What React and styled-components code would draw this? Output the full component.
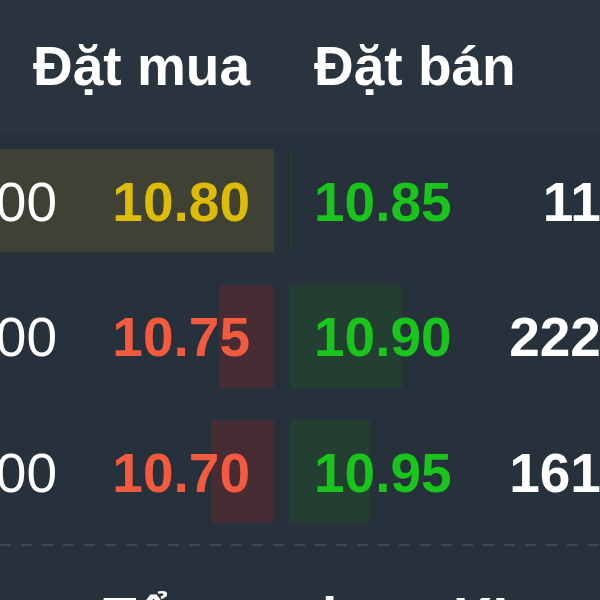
import React from 'react';
import styled, { createGlobalStyle } from 'styled-components';

const Global = createGlobalStyle`
  html, body { margin: 0; padding: 0; background: #27313c; }
  body { font-family: "Liberation Sans", Arial, sans-serif; }
`;

const COLORS = {
  white: '#ffffff',
  yellow: '#dcbc06',
  red: '#f35a3e',
  green: '#19c41b',
  redBar: '#482c34',
  greenBar: '#233f31',
  highlight: '#3e4133',
};

const Board = styled.div`
  width: 600px;
  height: 600px;
  overflow: hidden;
  background: #27313c;
  font-family: "Liberation Sans", Arial, sans-serif;
  font-size: 55px;
  font-weight: 700;
  line-height: 1;
`;

const Track = styled.div`
  width: 710px;
`;

const Grid = styled.div`
  display: grid;
  grid-template-columns: 274px 420px;
  column-gap: 16px;
`;

const HeaderRow = styled(Grid)`
  height: 133px;
  align-items: center;
  background: #2a343f;
  color: ${COLORS.white};
`;

const HeadCell = styled.div`
  text-align: ${(p) => (p.$side === 'bid' ? 'right' : 'left')};
  padding: ${(p) => (p.$side === 'bid' ? '0 24px 0 0' : '0 0 0 24px')};
  ${(p) => (p.$side === 'ask' ? 'width: 214px; box-sizing: border-box;' : '')}
  white-space: nowrap;
`;

const Body = styled.div`
  padding-bottom: 4px;
  border-bottom: 2px solid transparent;
  background-image: repeating-linear-gradient(
    to right,
    #3b4753 0 11px,
    transparent 11px 21px
  );
  background-size: 100% 2px;
  background-position: 0 100%;
  background-repeat: no-repeat;
  background-origin: border-box;
`;

const Row = styled(Grid)`
  height: 135.5px;
  align-items: center;
`;

const Side = styled.div`
  height: 103px;
  display: grid;
  grid-template-columns: ${(p) => (p.$side === 'bid' ? '1fr 214px' : '214px 1fr')};
  align-items: stretch;
  background: ${(p) => (p.$highlight ? COLORS.highlight : 'transparent')};
`;

const Qty = styled.div`
  display: flex;
  align-items: center;
  justify-content: flex-end;
  overflow: hidden;
  white-space: nowrap;
  color: ${COLORS.white};
  font-weight: ${(p) => (p.$side === 'bid' ? 400 : 700)};
  padding-right: ${(p) => (p.$side === 'bid' ? '3px' : '2px')};
  padding-top: 3px;
`;

const PriceCell = styled.div`
  position: relative;
  display: flex;
  align-items: center;
  justify-content: ${(p) => (p.$side === 'bid' ? 'flex-end' : 'flex-start')};
  padding: ${(p) => (p.$side === 'bid' ? '3px 24px 0 0' : '3px 0 0 24px')};
  color: ${(p) => p.$color};
`;

const Bar = styled.div`
  position: absolute;
  top: 0;
  bottom: 0;
  ${(p) => (p.$side === 'bid' ? 'right: 0;' : 'left: 0;')}
  background: ${(p) => (p.$side === 'bid' ? COLORS.redBar : COLORS.greenBar)};
`;

const PriceText = styled.span`
  position: relative;
`;

const FooterRow = styled.div`
  display: grid;
  grid-template-columns: 219px 131px auto;
  align-items: start;
  padding: 44px 0 0 103px;
  color: ${COLORS.white};
  white-space: nowrap;
`;

const rows = [
  {
    bidQty: '12,300', bid: '10.80', bidColor: COLORS.yellow, bidBar: 0, highlight: true,
    ask: '10.85', askColor: COLORS.green, askBar: 2, askQty: '11,700',
  },
  {
    bidQty: '25,600', bid: '10.75', bidColor: COLORS.red, bidBar: 55, highlight: false,
    ask: '10.90', askColor: COLORS.green, askBar: 112, askQty: '222,500',
  },
  {
    bidQty: '31,400', bid: '10.70', bidColor: COLORS.red, bidBar: 63, highlight: false,
    ask: '10.95', askColor: COLORS.green, askBar: 80, askQty: '161,300',
  },
];

export default function App() {
  return (
    <>
      <Global />
      <Board>
        <Track>
          <HeaderRow>
            <HeadCell $side="bid">Đặt mua</HeadCell>
            <HeadCell $side="ask">Đặt bán</HeadCell>
          </HeaderRow>
          <Body>
            {rows.map((r) => (
              <Row key={r.bid}>
                <Side $side="bid" $highlight={r.highlight}>
                  <Qty $side="bid">{r.bidQty}</Qty>
                  <PriceCell $side="bid" $color={r.bidColor}>
                    {r.bidBar > 0 && <Bar $side="bid" style={{ width: r.bidBar }} />}
                    <PriceText>{r.bid}</PriceText>
                  </PriceCell>
                </Side>
                <Side $side="ask">
                  <PriceCell $side="ask" $color={r.askColor}>
                    {r.askBar > 0 && <Bar $side="ask" style={{ width: r.askBar }} />}
                    <PriceText>{r.ask}</PriceText>
                  </PriceCell>
                  <Qty $side="ask">{r.askQty}</Qty>
                </Side>
              </Row>
            ))}
          </Body>
          <FooterRow>
            <span>Tổng</span>
            <span>lưu</span>
            <span>KL</span>
          </FooterRow>
        </Track>
      </Board>
    </>
  );
}
